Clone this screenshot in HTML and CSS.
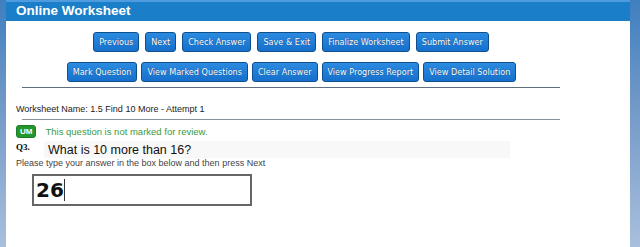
FILE: index.html
```html
<html>
    <head>
        <title>Online Worksheet</title>
        <link rel="stylesheet" href="styles.css">
    </head>
    <body>
        <div class="frame">
            <div class="header">Online Worksheet</div>

            <div class="toolbar">
                <div class="btn-row first">
                    <button class="blue">Previous</button>
                    <button class="blue">Next</button>
                    <button class="blue">Check Answer</button>
                    <button class="blue">Save &amp; Exit</button>
                    <button class="blue">Finalize Worksheet</button>
                    <button class="blue">Submit Answer</button>
                </div>
                <div class="btn-row second">
                    <button class="blue">Mark Question</button>
                    <button class="blue">View Marked Questions</button>
                    <button class="blue">Clear Answer</button>
                    <button class="blue">View Progress Report</button>
                    <button class="blue">View Detail Solution</button>
                </div>
                <div class="line"></div>
            </div>

            <div class="ws-name">Worksheet Name: 1.5 Find 10 More - Attempt 1</div>
            <div class="line short"></div>

            <div class="mark-row">
                <span class="badge">UM</span>
                <span class="mark-text">This question is not marked for review.</span>
            </div>

            <div class="question">
                <span class="qnum">Q3.</span>
                <span class="qtext">What is 10 more than 16?</span>
            </div>
            <div class="hint">Please type your answer in the box below and then press Next</div>

            <div class="answer">
                <span class="typed">26</span><span class="caret"></span>
            </div>
        </div>
    </body>
</html>
```

FILE: styles.css
```css
body {
    margin: 0;
    padding: 0;
    width: 640px;
    height: 247px;
    overflow: hidden;
    background: linear-gradient(to bottom, #3f7fc0, #6f97c6 40%, #a9bfdd);
    font-family: "Liberation Sans", Arial, sans-serif;
}

.frame {
    margin: 0 10px 0 6px;
    height: 247px;
    background-color: white;
}

.header {
    height: 19px;
    border-top: 2px solid #4f9be0;
    background-color: #1a7fc8;
    color: white;
    font-weight: bold;
    font-size: 13.5px;
    line-height: 18px;
    padding-left: 10px;
}

.toolbar {
    margin: 0 0 0 16px;
    width: 538px;
    padding-top: 11px;
}

.btn-row {
    display: flex;
    justify-content: center;
}

.btn-row.first {
    gap: 6px;
}

.btn-row.second {
    gap: 4px;
    margin-top: 10px;
    padding-left: 1px;
}

.blue {
    height: 20px;
    padding: 0 5px;
    border: 1px solid #0e4f8e;
    border-radius: 3px;
    background: linear-gradient(to bottom, #2b8be0, #1670cc);
    color: white;
    font-family: "DejaVu Sans Condensed", "DejaVu Sans", sans-serif;
    font-size: 9px;
    text-shadow: 0 0 1px #0a3d70;
}

.line {
    height: 0;
    border-top: 1px solid #5d6f7c;
    margin-top: 5px;
}

.line.short {
    margin: 5px 0 0 16px;
    width: 538px;
    border-top-color: #8a9299;
}

.ws-name {
    margin-top: 16px;
    padding-left: 10px;
    font-size: 9px;
    color: #222;
}

.mark-row {
    display: flex;
    align-items: center;
    gap: 9px;
    padding-left: 10px;
    margin-top: 5px;
    height: 12px;
}

.badge {
    background-color: #24962e;
    color: white;
    font-size: 8px;
    font-weight: bold;
    border-radius: 3px;
    padding: 1px 3px;
    line-height: 9px;
    border: 1px solid #1d7d26;
}

.mark-text {
    color: #3c9a3c;
    font-size: 9.5px;
}

.question {
    display: flex;
    align-items: flex-start;
    margin-top: 4px;
    padding-left: 10px;
}

.qnum {
    font-family: "Liberation Serif", serif;
    font-weight: bold;
    font-size: 9px;
    width: 28px;
    padding-top: 1px;
}

.qtext {
    width: 462px;
    height: 17px;
    padding-left: 4px;
    background-color: #f7f8f7;
    font-size: 12.5px;
    line-height: 18px;
    color: #111;
}

.hint {
    padding-left: 10px;
    font-size: 9px;
    line-height: 10px;
    color: #444;
}

.answer {
    margin: 6px 0 0 26px;
    width: 214px;
    height: 28px;
    border: 2px solid #666;
    display: flex;
    align-items: center;
    padding-left: 2px;
}

.typed {
    font-family: "DejaVu Sans", sans-serif;
    font-weight: bold;
    font-size: 20px;
    color: #111;
}

.caret {
    width: 1px;
    height: 22px;
    background-color: #333;
}
```
